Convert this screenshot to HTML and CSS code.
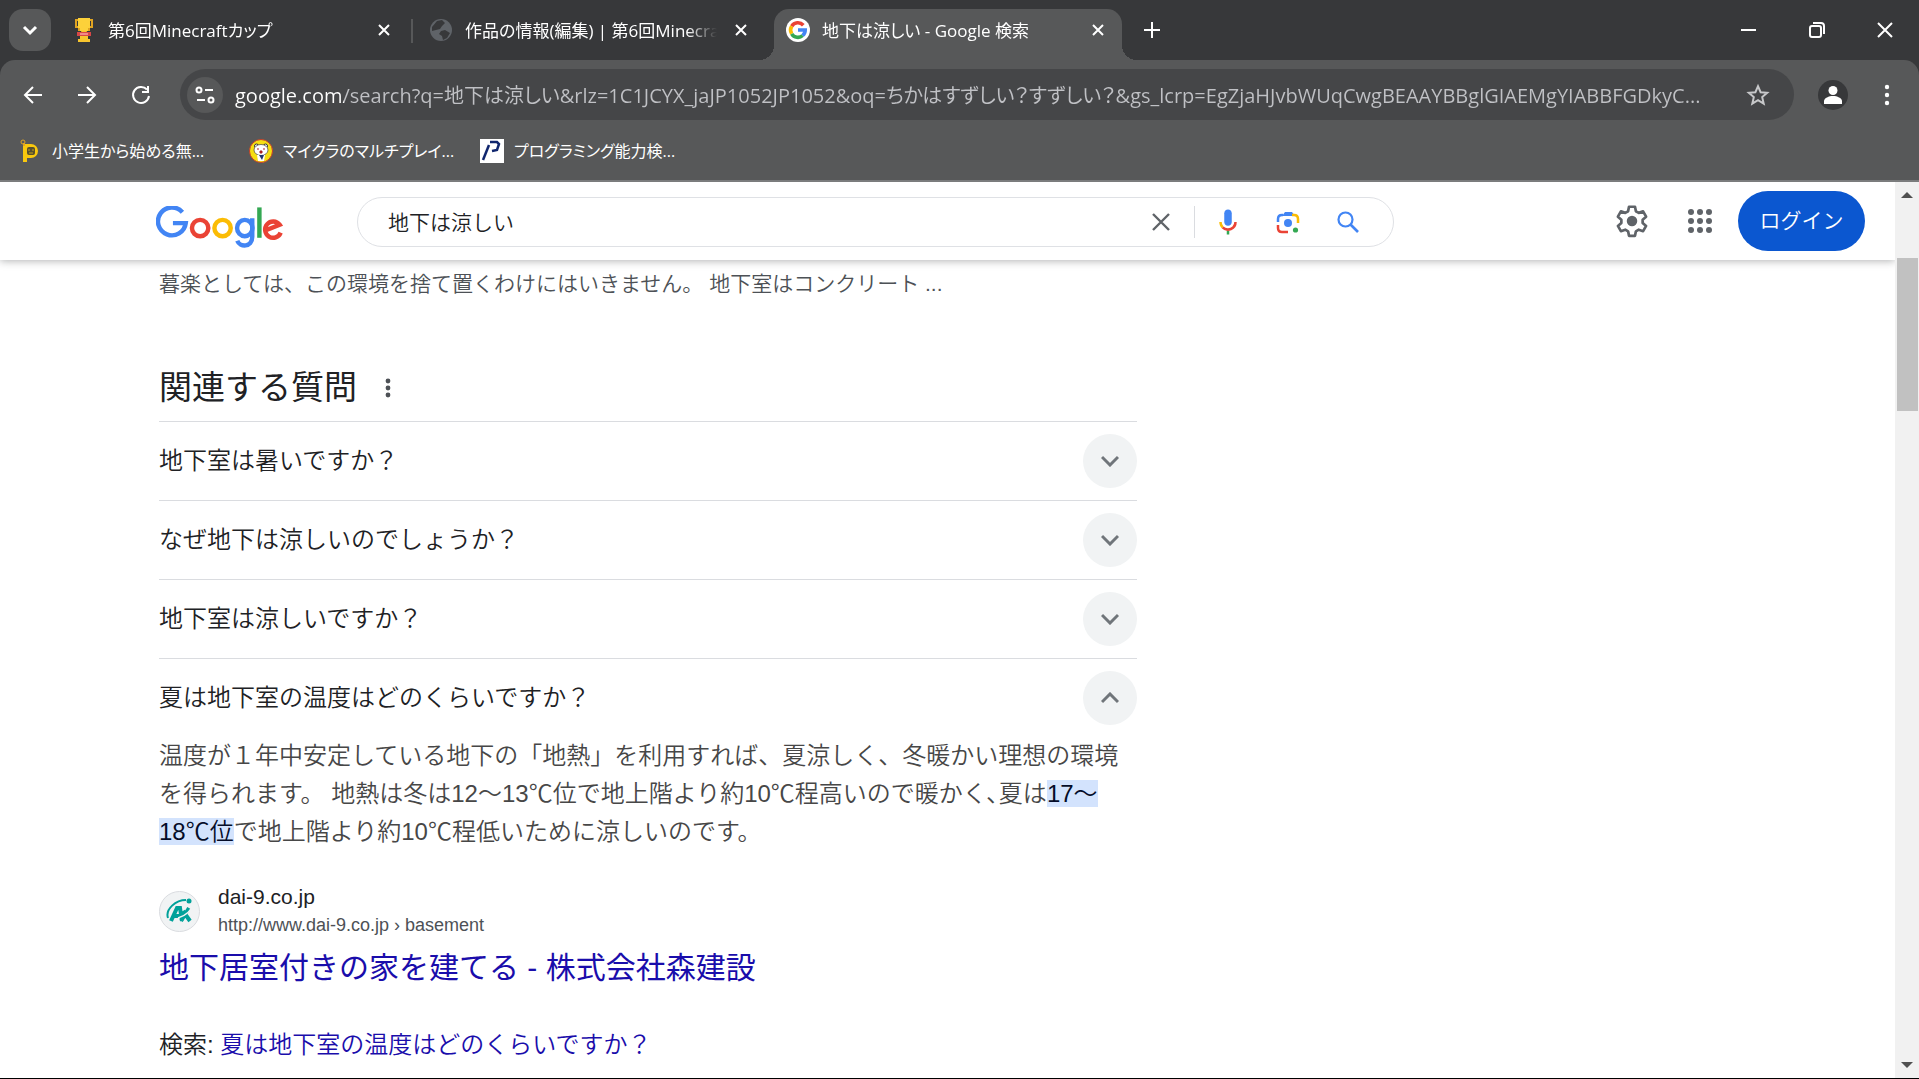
FILE: index.html
```html
<!DOCTYPE html>
<html lang="ja">
<head>
<meta charset="utf-8">
<title>地下は涼しい - Google 検索</title>
<meta name="viewport" content="width=device-width, initial-scale=1">
<link rel="stylesheet" href="styles.css">
</head>
<body>
<div class="chrome">
  <div class="tabstrip">
    <button class="tab-search" aria-label="タブを検索"><svg width="16" height="12" viewBox="0 0 16 12"><path d="M2 3l6 6 6-6" fill="none" stroke="#fff" stroke-width="3"/></svg></button>
    <div class="tab">
      <svg class="favicon" viewBox="0 0 24 24"><path d="M3 1h18v9h-3v3h-3v5H9v-5H6v-3H3z" fill="#e0a422"/><path d="M6 0h12v10h-2v3H8v-3H6z" fill="#fcd13a"/><path d="M5 3h1v5H5zM18 3h1v5h-1z" fill="#37383a"/><path d="M10 13h4v5h-4z" fill="#f7c52e"/><path d="M5 14h14v4H5z" fill="#d84747"/><path d="M8 15h8v2H8z" fill="#f08a8a"/><path d="M8 18h8v3h2v3H6v-3h2z" fill="#f7c52e"/></svg>
      <a class="tab-title" href="#">第6回Minecraftカップ</a>
      <button class="tab-close" aria-label="閉じる"><svg width="14" height="14" viewBox="0 0 14 14"><path d="M2 2l10 10M12 2L2 12" stroke="#fff" stroke-width="2"/></svg></button>
    </div>
    <div class="tab tab-divided">
      <svg class="favicon" viewBox="0 0 24 24"><circle cx="12" cy="12" r="11" fill="#5f6368"/><path d="M8 3l5-1 3 3-3 3-2 3-4 1-4 1V9zM12 13l4-1 5 3-3 5-4 2-1-4-3-2z" fill="#37383a"/></svg>
      <a class="tab-title" href="#">作品の情報(編集) | 第6回Minecraft</a>
      <button class="tab-close" aria-label="閉じる"><svg width="14" height="14" viewBox="0 0 14 14"><path d="M2 2l10 10M12 2L2 12" stroke="#fff" stroke-width="2"/></svg></button>
    </div>
    <div class="tab tab-active">
      <svg class="favicon" viewBox="0 0 24 24"><circle cx="12" cy="12" r="12" fill="#fff"/><g fill="none" stroke-width="3.6"><path d="M5.7 8.2A7.2 7.2 0 0 1 17.3 7.2" stroke="#ea4335"/><path d="M5.7 15.8A7.2 7.2 0 0 1 5.7 8.2" stroke="#fbbc04"/><path d="M16.7 17.5A7.2 7.2 0 0 1 5.7 15.8" stroke="#34a853"/><path d="M12 12h7.2a7.2 7.2 0 0 1-2.5 5.5" stroke="#4285f4"/></g></svg>
      <a class="tab-title" href="#" aria-current="page">地下は涼しい - Google 検索</a>
      <button class="tab-close" aria-label="閉じる"><svg width="14" height="14" viewBox="0 0 14 14"><path d="M2 2l10 10M12 2L2 12" stroke="#fff" stroke-width="2"/></svg></button>
    </div>
    <button class="new-tab" aria-label="新しいタブ"><svg width="18" height="18" viewBox="0 0 18 18"><path d="M9 1v16M1 9h16" stroke="#fff" stroke-width="2"/></svg></button>
    <div class="window-controls">
      <button aria-label="最小化"><svg width="16" height="16" viewBox="0 0 16 16"><path d="M0 7h15v2H0z" fill="#fff"/></svg></button>
      <button aria-label="元に戻す"><svg width="16" height="16" viewBox="0 0 16 16"><rect x="1" y="4" width="11" height="11" rx="2" fill="none" stroke="#fff" stroke-width="2"/><path d="M4 1h8q3 0 3 3v8" fill="none" stroke="#fff" stroke-width="2"/></svg></button>
      <button aria-label="ウィンドウを閉じる"><svg width="16" height="16" viewBox="0 0 16 16"><path d="M1 1l14 14M15 1L1 15" stroke="#fff" stroke-width="2"/></svg></button>
    </div>
  </div>
  <div class="toolbar">
    <div class="nav">
      <button aria-label="戻る"><svg width="20" height="20" viewBox="0 0 20 20"><path d="M19 10H2M10 2l-8 8 8 8" fill="none" stroke="#fff" stroke-width="2"/></svg></button>
      <button aria-label="進む"><svg width="20" height="20" viewBox="0 0 20 20"><path d="M1 10h17M10 2l8 8-8 8" fill="none" stroke="#fff" stroke-width="2"/></svg></button>
      <button aria-label="再読み込み"><svg width="20" height="20" viewBox="0 0 20 20"><path d="M16 4.5A8 8 0 1 0 18 11" fill="none" stroke="#fff" stroke-width="2"/><path d="M18 1v7h-7V6h5V1z" fill="#fff"/></svg></button>
    </div>
    <div class="omnibox">
      <button class="site-info" aria-label="サイト情報"><svg width="20" height="20" viewBox="0 0 20 20" fill="none" stroke="#fff" stroke-width="2"><circle cx="4" cy="5" r="2.5"/><path d="M10 5h8M2 15h8"/><circle cx="16" cy="15" r="2.5"/></svg></button>
      <input class="url" type="text" aria-label="アドレス" value="google.com/search?q=地下は涼しい&amp;rlz=1C1JCYX_jaJP1052JP1052&amp;oq=ちかはすずしい？すずしい？&amp;gs_lcrp=EgZjaHJvbWUqCwgBEAAYBBglGIAEMgYIABBFGDkyC...">
      <button class="star" aria-label="ブックマーク"><svg width="24" height="24" viewBox="0 0 24 24"><path d="M12 3.2l2.6 6 6.6.6-5 4.3 1.5 6.5L12 17.200l-5.700 3.400 1.500-6.500-5-4.300 6.600-.6z" fill="none" stroke="#c7c8ca" stroke-width="2"/></svg></button>
    </div>
    <button class="profile" aria-label="プロフィール"><svg width="20" height="20" viewBox="0 0 20 20" fill="#fff"><circle cx="10" cy="5.500" r="4.500"/><path d="M1 19v-3c0-3 5-5 9-5s9 2 9 5v3z"/></svg></button>
    <button class="menu" aria-label="メニュー"><svg width="6" height="22" viewBox="0 0 6 22" fill="#fff"><circle cx="3" cy="3" r="2.200"/><circle cx="3" cy="11" r="2.200"/><circle cx="3" cy="19" r="2.200"/></svg></button>
  </div>
  <nav class="bookmarks">
    <a href="#"><svg class="favicon" viewBox="0 0 24 24"><path d="M7 5h6a7 7 0 0 1 0 14H9v4H5V5z" fill="#f9c80e"/><circle cx="5" cy="3" r="2" fill="none" stroke="#e0a422"/><path d="M6 4v3" stroke="#e0a422" stroke-width="2"/><rect x="9" y="8" width="8" height="8" rx="2" fill="#57502f"/><path d="M10 11h2M14 11h2M11 14h4" stroke="#c9a21a"/></svg><span>小学生から始める無...</span></a>
    <a href="#"><svg class="favicon" viewBox="0 0 24 24"><circle cx="12" cy="12" r="11.500" fill="#f5de12" stroke="#c33b2c"/><circle cx="7.500" cy="7" r="2" fill="#fff" stroke="#333"/><circle cx="16.500" cy="7" r="2" fill="#fff" stroke="#333"/><ellipse cx="12" cy="11" rx="7" ry="5.500" fill="#fff" stroke="#444" stroke-width=".7"/><path d="M8 10h2M14 10h2M11 12h2v2h-2z" stroke="#a22" fill="#a22"/><path d="M8 16h8l-1 6H9z" fill="#fff"/><path d="M10 16h5l-2 5z" fill="#20356f"/></svg><span>マイクラのマルチプレイ...</span></a>
    <a href="#"><svg class="favicon" viewBox="0 0 24 24"><path d="M0 0h24v24H0z" fill="#fff"/><path d="M3 21L9 6" stroke="#10266e" stroke-width="2.500"/><path d="M10 3h7l2 2-2 6-5 1" fill="none" stroke="#10266e" stroke-width="2.500"/></svg><span>プログラミング能力検...</span></a>
  </nav>
</div>
<div class="viewport">
  <div class="page">
    <header class="search-header">
      <a class="logo" href="#" aria-label="Google"><svg width="128" height="43" viewBox="0 0 272 92" fill="none" stroke-width="9.500">
        <path d="M55.600 13.300A29.800 29.800 0 1 0 62.700 36.700H35.300" stroke="#4285f4"/>
        <circle cx="93.500" cy="47.200" r="17.500" stroke="#ea4335"/>
        <circle cx="141.500" cy="47.200" r="17.500" stroke="#fbbc05"/>
        <ellipse cx="189" cy="47.200" rx="16.500" ry="17.500" stroke="#4285f4"/>
        <path d="M205 26.300V66C205 90 178 88 173 74.500" stroke="#4285f4"/>
        <path d="M220.300 3v65" stroke="#34a853"/>
        <path d="M235.500 51.500L263.500 40A17.200 17.500 0 1 0 265.800 57" stroke="#ea4335"/>
      </svg></a>
      <form class="search-box">
        <input type="text" aria-label="検索" value="地下は涼しい">
        <button type="button" aria-label="クリア"><svg width="18" height="18" viewBox="0 0 18 18"><path d="M1 1l16 16M17 1L1 17" stroke="#5f6368" stroke-width="2.400"/></svg></button>
        <span class="separator"></span>
        <button type="button" aria-label="音声検索"><svg width="30" height="30" viewBox="0 0 24 24"><path d="M12 15c1.700 0 3-1.300 3-3V5c0-1.700-1.300-3-3-3S9 3.300 9 5v7c0 1.700 1.300 3 3 3z" fill="#4285f4"/><path d="M11 18.900h2V22h-2z" fill="#34a853"/><path d="M7 12H5c0 1.900.8 3.700 2 5l1.400-1.400A5 5 0 0 1 7 12z" fill="#fbbc04"/><path d="M12 17a5 5 0 0 1-3.600-1.400L7 17a7 7 0 0 0 12-5h-2a5 5 0 0 1-5 5z" fill="#ea4335"/></svg></button>
        <button type="button" aria-label="画像で検索"><svg width="24" height="24" viewBox="0 0 24 24" fill="none" stroke-width="2.500"><path d="M2 12V9q0-4 4-4h1" stroke="#4285f4"/><path d="M6 6l3-4h7l3 4z" fill="#4285f4"/><path d="M16 5h2q4 0 4 4v4" stroke="#fbbc04"/><path d="M2 15v3q0 4 4 4h6" stroke="#ea4335"/><circle cx="12" cy="13" r="4" fill="#4285f4"/><circle cx="19.500" cy="20" r="2.600" fill="#34a853"/></svg></button>
        <button type="submit" aria-label="検索"><svg width="24" height="24" viewBox="0 0 24 24"><circle cx="9.500" cy="9.500" r="7" fill="none" stroke="#4285f4" stroke-width="2.200"/><path d="M14.500 14.500l7.500 7.500" stroke="#4285f4" stroke-width="2.600"/></svg></button>
      </form>
      <div class="account">
        <button aria-label="設定"><svg width="36" height="36" viewBox="0 0 24 24"><path d="M10 2.500h4l.6 3 1.900 1.100 2.900-1 2 3.500-2.300 2v2.200l2.300 2-2 3.500-2.900-1-1.900 1.100-.6 3h-4l-.6-3-1.900-1.100-2.900 1-2-3.500 2.300-2v-2.200l-2.300-2 2-3.500 2.900 1 1.900-1.100z" fill="none" stroke="#5f6368" stroke-width="1.800" stroke-linejoin="round"/><circle cx="12" cy="12" r="3.500" fill="#5f6368"/></svg></button>
        <button aria-label="Google アプリ"><svg width="24" height="24" viewBox="0 0 24 24" fill="#5f6368"><circle cx="3" cy="3" r="3"/><circle cx="12" cy="3" r="3"/><circle cx="21" cy="3" r="3"/><circle cx="3" cy="12" r="3"/><circle cx="12" cy="12" r="3"/><circle cx="21" cy="12" r="3"/><circle cx="3" cy="21" r="3"/><circle cx="12" cy="21" r="3"/><circle cx="21" cy="21" r="3"/></svg></button>
        <a class="login" href="#">ログイン</a>
      </div>
    </header>
    <main class="results">
      <p class="snippet">暮楽としては、この環境を捨て置くわけにはいきません。 地下室はコンクリート&nbsp;...</p>
      <section>
        <div class="section-head">
          <h2>関連する質問</h2>
          <button aria-label="この結果について"><svg width="6" height="20" viewBox="0 0 6 20" fill="#4d5156"><circle cx="3" cy="3" r="2.400"/><circle cx="3" cy="10" r="2.400"/><circle cx="3" cy="17" r="2.400"/></svg></button>
        </div>
        <button class="question"><span class="question-text">地下室は暑いですか？</span><span class="toggle"><svg width="18" height="12" viewBox="0 0 18 12"><path d="M1 2l8 8 8-8" fill="none" stroke="#70757a" stroke-width="3"/></svg></span></button>
        <button class="question"><span class="question-text">なぜ地下は涼しいのでしょうか？</span><span class="toggle"><svg width="18" height="12" viewBox="0 0 18 12"><path d="M1 2l8 8 8-8" fill="none" stroke="#70757a" stroke-width="3"/></svg></span></button>
        <button class="question"><span class="question-text">地下室は涼しいですか？</span><span class="toggle"><svg width="18" height="12" viewBox="0 0 18 12"><path d="M1 2l8 8 8-8" fill="none" stroke="#70757a" stroke-width="3"/></svg></span></button>
        <button class="question" aria-expanded="true"><span class="question-text">夏は地下室の温度はどのくらいですか？</span><span class="toggle"><svg width="18" height="12" viewBox="0 0 18 12"><path d="M1 10l8-8 8 8" fill="none" stroke="#70757a" stroke-width="3"/></svg></span></button>
        <p class="answer">温度が１年中安定している地下の「地熱」を利用すれば、夏涼しく、冬暖かい理想の環境を得られます。 地熱は冬は12～13℃位で地上階より約10℃程高いので暖かく､夏は<mark>17～</mark><br><mark>18℃位</mark>で地上階より約10℃程低いために涼しいのです。</p>
        <div class="source">
          <span class="source-icon"><svg width="28" height="28" viewBox="0 0 28 28" fill="none" stroke="#00a19a"><path d="M5 24l6-13h3l2 13M8 19h7M15 24l8-13M17 14l7 10" stroke-width="4"/><path d="M2 21C-1 12 10 3 20 3" stroke-width="2"/><path d="M26 7c1 6-7 12-14 14" stroke="#f1f3f4" stroke-width="1.500"/><circle cx="23" cy="4" r="2.500" fill="#00a19a" stroke="none"/></svg></span>
          <div>
            <div class="source-name">dai-9.co.jp</div>
            <cite>http://www.dai-9.co.jp › basement</cite>
          </div>
        </div>
        <h3><a href="#">地下居室付きの家を建てる - 株式会社森建設</a></h3>
        <p class="more">検索: <a href="#">夏は地下室の温度はどのくらいですか？</a></p>
      </section>
    </main>
  </div>
  <div class="scrollbar" aria-hidden="true">
    <span class="arrow-up"></span>
    <span class="thumb"></span>
    <span class="arrow-down"></span>
  </div>
</div>
</body>
</html>
```
FILE: styles.css
```css
* { box-sizing: border-box; }
body {
  margin: 0;
  min-height: 100vh;
  display: flex;
  flex-direction: column;
  background: #fff;
  border-bottom: 1px solid #000;
  font-family: "Liberation Sans", "Noto Sans CJK JP", sans-serif;
  font-weight: 350;
  color: #202124;
}
button {
  display: flex;
  align-items: center;
  justify-content: center;
  padding: 0;
  border: 0;
  background: none;
  font: inherit;
  color: inherit;
}
input { border: 0; padding: 0; background: none; outline: 0; min-width: 0; font: inherit; color: inherit; }
a { color: inherit; text-decoration: none; }
h2, h3, p { margin: 0; font-weight: inherit; }
svg { flex: none; display: block; }

/* Browser frame */
.chrome {
  background: #37383a;
  color: #fff;
  font-family: "Open Sans", "Noto Sans CJK JP", sans-serif;
  font-weight: 400;
  font-feature-settings: "palt";
  border-bottom: 2px solid #7b7c7d;
}
.tabstrip { display: flex; align-items: center; height: 60px; padding-left: 9px; }
.tab-search { width: 42px; height: 42px; border-radius: 14px; background: #575859; margin-right: 9px; }
.tab {
  display: flex;
  align-items: center;
  gap: 12px;
  width: 357px;
  height: 51px;
  margin-top: 9px;
  padding: 0 21px 9px 12px;
}
.favicon { width: 24px; height: 24px; flex: none; }
.tab-title {
  flex: 1;
  min-width: 0;
  overflow: hidden;
  white-space: nowrap;
  font-size: 17px;
  line-height: 28px;
  padding-top: 2px;
  mask-image: linear-gradient(90deg, #000 88%, transparent);
}
.tab-close { width: 24px; height: 24px; }
.tab-divided { position: relative; }
.tab-divided::before {
  content: "";
  position: absolute;
  left: -6px;
  top: 10px;
  width: 2px;
  height: 24px;
  background: #575859;
}
.tab-active {
  position: relative;
  width: 348px;
  padding-right: 12px;
  border-radius: 15px 15px 0 0;
  background: #575859;
}
.tab-active::before, .tab-active::after {
  content: "";
  position: absolute;
  bottom: 0;
  width: 15px;
  height: 15px;
}
.tab-active::before { right: 100%; background: radial-gradient(circle at 0 0, transparent 15px, #575859 15px); }
.tab-active::after { left: 100%; background: radial-gradient(circle at 100% 0, transparent 15px, #575859 15px); }
.new-tab { width: 42px; height: 42px; margin-left: 9px; }
.window-controls { display: flex; margin-left: auto; }
.window-controls button { width: 68px; height: 60px; }

.toolbar {
  display: flex;
  align-items: center;
  height: 69px;
  padding: 0 17px 0 6px;
  background: #575859;
  border-radius: 15px 15px 0 0;
}
.nav { display: flex; width: 174px; }
.nav button { width: 54px; height: 42px; }
.omnibox {
  flex: 1;
  display: flex;
  align-items: center;
  height: 51px;
  padding: 0 24px 0 7px;
  border-radius: 26px;
  background: #454648;
}
.site-info { width: 36px; height: 36px; border-radius: 18px; background: #575859; }
.url {
  flex: 1;
  margin: 0 12px;
  font-size: 20px;
  height: 36px;
  color: transparent;
  background: linear-gradient(90deg, #fff 109px, #c0c1c5 109px) text;
}
.profile { width: 30px; height: 30px; border-radius: 15px; background: #37383a; margin: 0 24px; }
.menu { width: 30px; height: 30px; }
.bookmarks { display: flex; height: 51px; padding: 0 18px 7px; background: #575859; align-items: center; }
.bookmarks a { display: flex; align-items: center; gap: 10px; width: 231px; font-size: 16px; line-height: 28px; }

/* Page */
.viewport { flex: 1; display: flex; }
.page { flex: 1; min-width: 0; }
.search-header {
  display: flex;
  height: 78px;
  padding: 0 30px 0 156px;
  box-shadow: 0 1px 8px rgba(32, 33, 36, 0.35);
  clip-path: inset(0 0 -16px 0);
}
.logo { width: 201px; padding-top: 24px; }
.search-box {
  display: flex;
  align-items: center;
  flex: 0 1 1037px;
  height: 50px;
  margin-top: 15px;
  padding: 0 15px 0 30px;
  border: 1px solid #dfe1e5;
  border-radius: 25px;
}
.search-box input { flex: 1; font-size: 21px; height: 40px; padding-bottom: 3px; }
.search-box button { width: 60px; height: 48px; }
.separator { width: 1px; height: 32px; background: #dadce0; margin: 0 3px; }
.account { display: flex; align-items: center; margin-left: auto; gap: 8px; }
.account button { width: 60px; height: 60px; }
.login {
  display: flex;
  align-items: center;
  justify-content: center;
  width: 127px;
  height: 60px;
  padding-bottom: 5px;
  border-radius: 30px;
  background: #0b57d0;
  color: #fff;
  font-size: 21px;
}
.results { width: 978px; margin-left: 159px; padding: 8px 0 16px; }
.snippet { font-size: 21px; line-height: 32px; color: #4d5156; }
.section-head { display: flex; align-items: center; gap: 28px; margin: 66px 0 11px; }
.section-head h2 { font-size: 33px; line-height: 44px; font-weight: 400; }
.question {
  width: 100%;
  height: 79px;
  justify-content: space-between;
  border-top: 1px solid #dadce0;
  font-size: 24px;
  text-align: left;
}
.question-text { padding-bottom: 6px; }
.toggle {
  display: flex;
  align-items: center;
  justify-content: center;
  width: 54px;
  height: 54px;
  border-radius: 27px;
  background: #f1f3f4;
}
.answer { font-size: 24px; line-height: 38px; color: #474747; }
mark { background: #d3e3fd; color: #040c28; }
.source { display: flex; align-items: center; gap: 18px; margin-top: 32px; }
.source-icon {
  display: flex;
  align-items: center;
  justify-content: center;
  width: 41px;
  height: 41px;
  border: 1px solid #dadce0;
  border-radius: 21px;
  background: #f1f3f4;
}
.source-name { font-size: 21px; line-height: 28px; }
cite { display: block; font-size: 18px; line-height: 28px; font-style: normal; color: #4d5156; }
h3 { margin-top: 9px; font-size: 30px; line-height: 40px; font-weight: 400; color: #1a0dab; }
.more { margin-top: 41px; font-size: 24px; line-height: 32px; }
.more a { color: #1a0dab; }

.scrollbar { display: flex; flex-direction: column; align-items: center; width: 24px; padding: 10px 0; background: #f1f1f1; }
.arrow-up { border: 6px solid transparent; border-top: 0; border-bottom: 6px solid #505050; }
.arrow-down { border: 6px solid transparent; border-bottom: 0; border-top: 6px solid #505050; margin-top: auto; }
.thumb { width: 21px; height: 153px; margin-top: 60px; background: #c1c1c1; }
```
